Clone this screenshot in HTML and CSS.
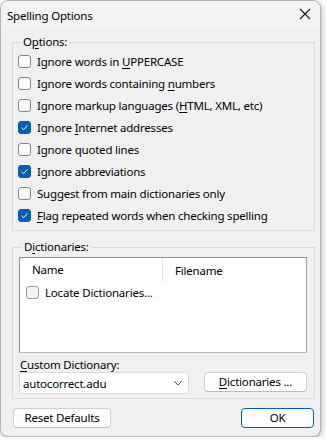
FILE: index.html
```html
<!DOCTYPE html>
<html lang="en">
<head>
  <meta charset="UTF-8" />
  <title>Spelling Options</title>
  <link rel="stylesheet" href="styles.css">
</head>
<body>

  <div class="window">
    <div class="titlebar">
      <span class="title">Spelling Options</span>
      <svg class="close" width="12" height="12" viewBox="0 0 12 12">
        <path d="M1 1 L11 11 M11 1 L1 11" stroke="#1a1a1a" stroke-width="1.1" fill="none"/>
      </svg>
    </div>

    <div class="content">
      <fieldset class="group options">
        <legend>O<u>p</u>tions:</legend>
        <label class="check"><span class="box"></span><span>Ignore words in <u>U</u>PPERCASE</span></label>
        <label class="check"><span class="box"></span><span>Ignore words containing <u>n</u>umbers</span></label>
        <label class="check"><span class="box"></span><span>Ignore markup languages (<u>H</u>TML, XML, etc)</span></label>
        <label class="check"><span class="box on"></span><span>Ignore <u>I</u>nternet addresses</span></label>
        <label class="check"><span class="box"></span><span>Ignore quoted lines</span></label>
        <label class="check"><span class="box on"></span><span>Ignore abbreviations</span></label>
        <label class="check"><span class="box"></span><span>Suggest from main dictionaries only</span></label>
        <label class="check"><span class="box on"></span><span><u>F</u>lag repeated words when checking spelling</span></label>
      </fieldset>

      <fieldset class="group dicts">
        <legend>D<u>i</u>ctionaries:</legend>
        <div class="list">
          <div class="list-head">
            <span class="col-name">Name</span>
            <span class="col-file">Filename</span>
          </div>
          <label class="check item"><span class="box dim"></span><span>Locate Dictionaries...</span></label>
        </div>
        <div class="custom-label"><u>C</u>ustom Dictionary:</div>
        <div class="custom-row">
          <div class="select">
            <span>autocorrect.adu</span>
            <svg width="10" height="6" viewBox="0 0 10 6">
              <path d="M1 1 L5 5 L9 1" stroke="#5a5a5a" stroke-width="1" fill="none"/>
            </svg>
          </div>
          <button class="btn dict-btn"><u>D</u>ictionaries ...</button>
        </div>
      </fieldset>

      <div class="footer">
        <button class="btn reset">Reset Defaults</button>
        <button class="btn ok">OK</button>
      </div>
    </div>
  </div>

</body>
</html>
```

FILE: styles.css
```css
:root {
  --face: #f0f0f0;
  --line: #d9d9d9;
  --accent: #005fb8;
  --font: 'Noto Sans', 'Liberation Sans', sans-serif;
}

body {
  margin: 0;
  background: #fbfbfb;
  font-family: var(--font);
  font-size: 11.5px;
  letter-spacing: -0.2px;
  color: #000;
}

u {
  text-decoration-thickness: 1px;
  text-underline-offset: 2px;
}

.window {
  width: 319px;
  height: 435px;
  background: var(--face);
  border: 1px solid #b4b4b4;
  border-radius: 8px;
  box-shadow: 1px 2px 5px rgba(0, 0, 0, 0.25);
  overflow: hidden;
}

.titlebar {
  height: 29px;
  display: flex;
  align-items: center;
  justify-content: space-between;
  padding: 0 7px 0 6px;
  background: #f3f3f3;
}

.title {
  margin-top: -1px;
}

.close {
  margin-right: 2px;
  margin-top: -3px;
}

.content {
  padding: 0 5px 0 11px;
}

.group {
  margin: 0;
  border: 1px solid var(--line);
  padding: 0 6px 4px 5px;
  min-width: 0;
}

.group legend {
  padding: 0 2px;
  margin-left: 3px;
  line-height: 16px;
}

.options {
  margin-top: 4px;
}

.check {
  display: flex;
  align-items: center;
  height: 22px;
  white-space: nowrap;
}

.box {
  width: 11px;
  height: 11px;
  border: 1px solid #858585;
  border-radius: 3px;
  background: #fbfbfb;
  margin-right: 6px;
  flex: none;
}

.box.on {
  border-color: var(--accent);
  background: var(--accent) url("data:image/svg+xml;utf8,<svg xmlns='http://www.w3.org/2000/svg' width='11' height='11' viewBox='0 0 11 11'><path d='M2.6 5.8 L4.6 7.7 L8.4 3.4' stroke='white' stroke-width='1' fill='none'/></svg>") no-repeat center;
}

.box.dim {
  border-color: #9a9a9a;
  background: #f4f4f4;
}

.dicts {
  margin-top: 8px;
  padding: 0 7px 4px 6px;
}

.list {
  margin-top: 2px;
  height: 94px;
  background: #fff;
  border: 1px solid #8f8f8f;
  border-right-color: #a0a0a0;
  border-bottom-color: #b8b8b8;
}

.list-head {
  display: flex;
  height: 24px;
  align-items: center;
}

.col-name {
  width: 130px;
  padding-left: 12px;
  height: 24px;
  line-height: 24px;
  border-right: 1px solid #e5e5e5;
}

.col-file {
  padding-left: 12px;
}

.item {
  height: 20px;
  padding-left: 6px;
}

.custom-label {
  margin-top: 5px;
  line-height: 14px;
  padding-left: 1px;
}

.custom-row {
  display: flex;
  justify-content: space-between;
  align-items: flex-start;
}

.select {
  width: 160px;
  height: 20px;
  background: #fff;
  border: 1px solid #dadada;
  border-radius: 3px;
  display: flex;
  align-items: center;
  justify-content: space-between;
  padding: 0 5px 0 3px;
}

.btn {
  font-family: var(--font);
  font-size: 11.5px;
  letter-spacing: -0.2px;
  color: #000;
  background: #fdfdfd;
  border: 1px solid #d0d0d0;
  border-bottom-color: #bcbcbc;
  border-radius: 4px;
  height: 20px;
  padding: 0;
  line-height: 16px;
}

.dict-btn {
  width: 103px;
}

.footer {
  display: flex;
  justify-content: space-between;
  margin-top: 9px;
  padding-left: 1px;
  padding-right: 1px;
}

.reset {
  width: 98px;
}

.ok {
  width: 73px;
  border: 1.5px solid var(--accent);
}
```
